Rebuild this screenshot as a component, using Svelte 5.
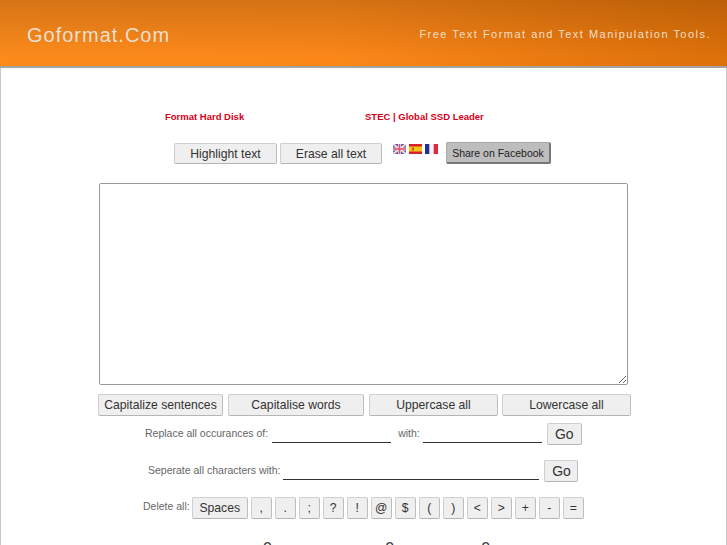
<script>
  const deleteKeys = [',', '.', ';', '?', '!', '@', '$', '(', ')', '<', '>', '+', '-', '='];
</script>

<div class="page">
  <header class="header">
    <div class="logo">Goformat.Com</div>
    <div class="tagline">Free Text Format and Text Manipulation Tools.</div>
  </header>

  <main class="main">
    <div class="ads">
      <a class="ad ad-one" href="#a">Format Hard Disk</a>
      <a class="ad ad-two" href="#b">STEC | Global SSD Leader</a>
    </div>

    <div class="top-tools">
      <button class="btn top-btn highlight">Highlight text</button>
      <button class="btn top-btn erase">Erase all text</button>
      <div class="flags">
        <svg class="flag" viewBox="0 0 13 10" aria-label="English">
          <rect width="13" height="10" fill="#5a5ab0" />
          <path d="M0 0L13 10M13 0L0 10" stroke="#f2d6dc" stroke-width="2" />
          <path d="M6.5 0V10M0 5H13" stroke="#f2e6ea" stroke-width="3" />
          <path d="M6.5 0V10M0 5H13" stroke="#d8506a" stroke-width="1.6" />
        </svg>
        <svg class="flag" viewBox="0 0 13 10" aria-label="Español">
          <rect width="13" height="10" fill="#d8222a" />
          <rect y="2.5" width="13" height="5" fill="#f5c518" />
          <rect x="3" y="3.5" width="2" height="3" fill="#b5602a" />
        </svg>
        <svg class="flag" viewBox="0 0 13 10" aria-label="Français">
          <rect width="13" height="10" fill="#f4f4f8" />
          <rect width="4.3" height="10" fill="#22308f" />
          <rect x="8.7" width="4.3" height="10" fill="#dc2a3c" />
        </svg>
      </div>
      <button class="share">Share on Facebook</button>
    </div>

    <textarea class="editor"></textarea>

    <div class="case-row">
      <button class="btn case c1">Capitalize sentences</button>
      <button class="btn case c2">Capitalise words</button>
      <button class="btn case c3">Uppercase all</button>
      <button class="btn case c4">Lowercase all</button>
    </div>

    <div class="replace-row">
      <span class="label">Replace all occurances of:</span>
      <input class="line r1" />
      <span class="label with">with:</span>
      <input class="line r2" />
      <button class="btn go">Go</button>
    </div>

    <div class="separate-row">
      <span class="label">Seperate all characters with:</span>
      <input class="line s1" />
      <button class="btn go go2">Go</button>
    </div>

    <div class="delete-row">
      <span class="label">Delete all:</span>
      <button class="btn key spaces">Spaces</button>
      {#each deleteKeys as key}
        <button class="btn key">{key}</button>
      {/each}
    </div>

    <div class="counts">
      <span class="label">Words:</span><span class="num n1">0</span>
      <span class="label c-gap">Characters:</span><span class="num n2">0</span>
      <span class="label c-gap2">Lines:</span><span class="num n3">0</span>
    </div>
  </main>
</div>

<style>
  :global(body) {
    margin: 0;
    background: #fff;
    overflow: hidden;
  }
  .page {
    width: 727px;
    height: 545px;
    overflow: hidden;
    font-family: "Liberation Sans", Arial, sans-serif;
  }
  .header {
    height: 68px;
    box-sizing: border-box;
    display: flex;
    justify-content: space-between;
    align-items: center;
    padding: 5px 16px 0 27px;
    background-image:
      linear-gradient(180deg, rgba(60, 30, 0, 0.2) 0%, rgba(60, 30, 0, 0) 85%),
      linear-gradient(90deg, #fb8a1b 0%, #fb8719 45%, #dc7009 100%);
    border-bottom: 2px solid #a7a39c;
  }
  .logo {
    color: #eadfd0;
    font-size: 20px;
    letter-spacing: 1px;
  }
  .tagline {
    color: #f2dfc8;
    font-size: 11px;
    letter-spacing: 1.48px;
    margin-bottom: 3px;
  }
  .main {
    height: 477px;
    box-sizing: border-box;
    border-left: 1px solid #c8c8c8;
    border-right: 1px solid #c8c8c8;
    display: flex;
    flex-direction: column;
  }
  .main > * {
    flex: none;
  }
  .ads {
    display: flex;
    padding: 41px 0 0 164px;
    height: 15px;
    line-height: 15px;
  }
  .ad {
    color: #d4001a;
    font-size: 9.5px;
    font-weight: bold;
    text-decoration: none;
  }
  .ad-one {
    width: 200px;
  }
  .top-tools {
    display: flex;
    align-items: flex-start;
    margin: 18px 0 0 173px;
    height: 24px;
  }
  .btn {
    box-sizing: border-box;
    font-family: "Liberation Sans", Arial, sans-serif;
    color: #333;
    background: #efefef;
    border: 1px solid #cfcfcf;
    border-bottom-color: #b5b5b5;
    border-right-color: #bdbdbd;
    border-radius: 2px;
    padding: 0;
    margin: 0;
  }
  .top-btn {
    height: 21px;
    margin-top: 1px;
    font-size: 12.2px;
  }
  .highlight {
    width: 103px;
  }
  .erase {
    width: 102px;
    margin-left: 3px;
  }
  .flags {
    display: flex;
    gap: 3px;
    margin: 2px 0 0 11px;
  }
  .flag {
    width: 13px;
    height: 10px;
    display: block;
  }
  .share {
    box-sizing: border-box;
    width: 105px;
    height: 22px;
    margin-left: 8px;
    background: #bdbdbd;
    border: 1px solid #a8a8a8;
    border-right: 2px solid #777;
    border-bottom: 2px solid #777;
    border-radius: 2px;
    color: #222;
    font-family: "Liberation Sans", Arial, sans-serif;
    font-size: 10.5px;
    padding: 0;
  }
  .editor {
    display: block;
    box-sizing: border-box;
    width: 529px;
    height: 202px;
    margin: 17px 0 0 98px;
    border: 1px solid #9a9a9a;
    border-radius: 2px;
    background: #fff;
    outline: none;
    padding: 2px;
  }
  .case-row {
    display: flex;
    margin: 9px 0 0 97px;
    height: 22px;
  }
  .case {
    height: 22px;
    font-size: 12.2px;
  }
  .c1 { width: 125px; }
  .c2 { width: 136px; margin-left: 5px; }
  .c3 { width: 129px; margin-left: 5px; }
  .c4 { width: 129px; margin-left: 4px; }
  .label {
    color: #666;
    font-size: 10.5px;
  }
  .line {
    box-sizing: border-box;
    height: 20px;
    border: 0;
    border-bottom: 1px solid #333;
    background: transparent;
    outline: none;
    padding: 0;
  }
  .replace-row {
    display: flex;
    align-items: flex-start;
    margin: 7px 0 0 144px;
    height: 22px;
  }
  .replace-row .label { margin-top: 4px; }
  .r1 { width: 119px; margin-left: 4px; }
  .with { margin-left: 7px; }
  .r2 { width: 119px; margin-left: 3px; }
  .go {
    width: 35px;
    height: 22px;
    font-size: 14px;
    margin-left: 5px;
  }
  .separate-row {
    display: flex;
    align-items: flex-start;
    margin: 15px 0 0 147px;
    height: 22px;
  }
  .separate-row .label { margin-top: 4px; }
  .s1 { width: 256px; margin-left: 3px; }
  .go2 { width: 34px; }
  .delete-row {
    display: flex;
    align-items: flex-start;
    margin: 15px 0 0 142px;
    height: 22px;
  }
  .delete-row .label { margin: 3px 2px 0 0; }
  .key {
    width: 21px;
    height: 22px;
    font-size: 12.2px;
    margin-right: 3px;
  }
  .spaces { width: 56px; }
  .counts {
    margin: 21px 0 0 216px;
    display: flex;
    align-items: baseline;
    white-space: nowrap;
  }
  .num {
    color: #333;
    font-size: 16px;
  }
  .n1 { margin-left: 13px; }
  .n2 { margin-left: 11px; }
  .n3 { margin-left: 15px; }
  .c-gap { margin-left: 48px; }
  .c-gap2 { margin-left: 44px; }
</style>
